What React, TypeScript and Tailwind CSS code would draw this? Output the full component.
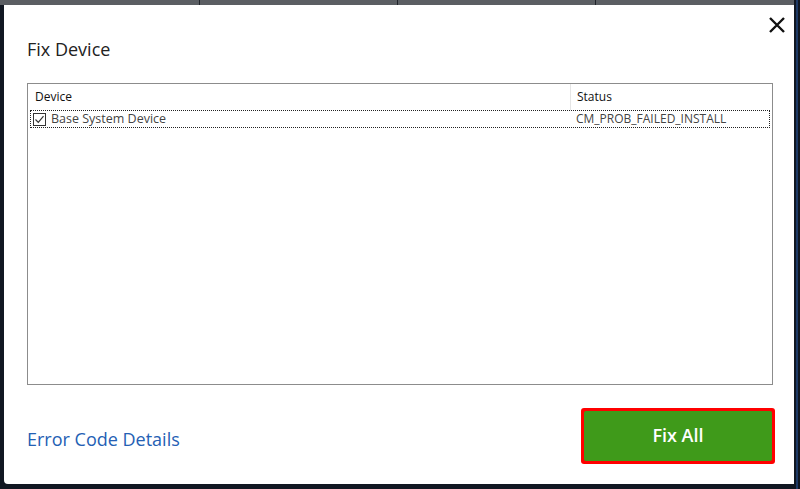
export default function App() {
  return (
    <div className="relative h-[489px] w-[800px] overflow-hidden bg-[#111722] font-['Open_Sans','Noto_Sans',sans-serif]">
      <div className="flex h-[5px] w-[794px] bg-[#5b5e63]">
        <div className="w-[200px] border-r border-[#202329]" />
        <div className="w-[198px] border-r border-[#202329]" />
        <div className="w-[198px] border-r border-[#202329]" />
        <div className="flex-1" />
      </div>
      <div className="absolute right-[2px] top-0 h-full w-[2px] bg-[#1e3a66]" />
      <div className="ml-[4px] flex h-[479px] w-[790px] flex-col rounded-bl-[4px] bg-white">
        <div className="relative flex h-[78px] items-start">
          <h1 className="ml-[23px] mt-[32px] text-[18px] leading-[24px] text-[#222]">Fix Device</h1>
          <button className="absolute right-[6px] top-[9px] flex h-[22px] w-[22px] items-center justify-center">
            <svg width="18" height="18" viewBox="0 0 18 18">
              <path d="M2 2 L16 16 M16 2 L2 16" stroke="#111" strokeWidth="2.4" />
            </svg>
          </button>
        </div>
        <div className="ml-[23px] mr-[21px] flex h-[302px] flex-col border border-[#8c8c8c] text-[12px] text-[#333]">
          <div className="flex h-[26px] items-center">
            <div className="flex h-full w-[543px] items-center border-r border-[#e5e5e5] pl-[7px] text-[#111]">Device</div>
            <div className="flex h-full flex-1 items-center pl-[6px] text-[#111]">Status</div>
          </div>
          <div className="mx-[2px] flex h-[18px] items-center border border-dotted border-[#222]">
            <div className="flex w-[539px] items-center">
              <span className="ml-[2px] mr-[5px] flex h-[13px] w-[13px] items-center justify-center border border-[#333]">
                <svg width="11" height="11" viewBox="0 0 11 11">
                  <path d="M1.5 5.5 L4.3 8.3 L9.5 2.2" fill="none" stroke="#333" strokeWidth="1.2" />
                </svg>
              </span>
              <span className="text-[12.5px] text-[#444]">Base System Device</span>
            </div>
            <div className="pl-[6px] text-[#444]">CM_PROB_FAILED_INSTALL</div>
          </div>
        </div>
        <div className="ml-[23px] mr-[19px] mt-[23px] flex items-center justify-between">
          <a className="mt-[6px] text-[18px] text-[#2460b4]">Error Code Details</a>
          <div className="rounded-[3px] bg-[#ff0000] p-[3px]">
            <button className="flex h-[50px] w-[188px] items-center justify-center rounded-[2px] bg-[#3f9a1a] pb-[2px] text-[18px] font-semibold text-white">
              Fix All
            </button>
          </div>
        </div>
      </div>
    </div>
  );
}
